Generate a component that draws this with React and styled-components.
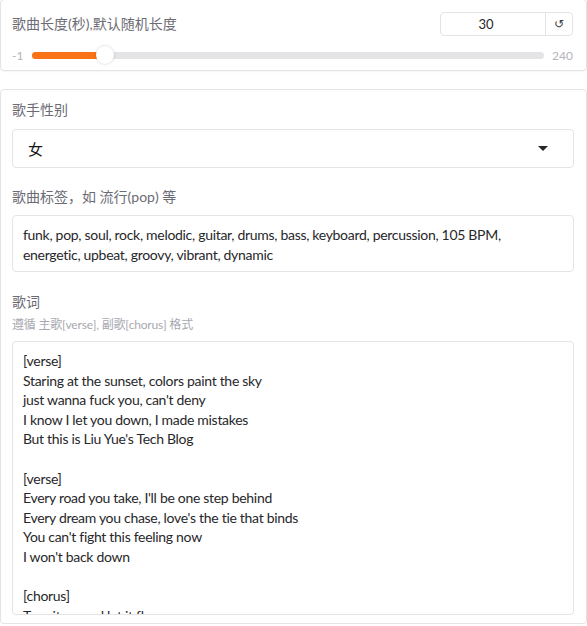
import styled, { createGlobalStyle } from "styled-components";

const GlobalStyle = createGlobalStyle`
  html, body {
    margin: 0;
    padding: 0;
    background: #ffffff;
    overflow: hidden;
  }
  body {
    font-family: Lato, "Noto Sans CJK SC", sans-serif;
    color: #27272a;
  }
`;

const Page = styled.div`
  width: 587px;
  margin-top: -1px;
  display: flex;
  flex-direction: column;
  gap: 18px;
`;

const Panel = styled.div`
  border: 1px solid #e4e4e7;
  border-radius: 4px;
  background: #fff;
  padding: ${(p) => p.$pad || "10px 12px 8px 11px"};
  display: flex;
  flex-direction: column;
  box-shadow: 0 1px 2px rgba(0, 0, 0, 0.04);
`;

const HeadRow = styled.div`
  display: flex;
  align-items: center;
  justify-content: space-between;
  padding-top: 1px;
`;

const Label = styled.div`
  font-size: 14px;
  line-height: 20px;
  color: #6b6b73;
  font-family: Lato, "Noto Sans CJK SC", sans-serif;
  margin-top: ${(p) => p.$mt || 0}px;
`;

const Info = styled.div`
  font-size: 12px;
  line-height: 20px;
  color: #a8a8b0;
  margin-top: 3px;
  letter-spacing: -0.2px;
`;

const NumberBox = styled.div`
  display: flex;
  width: 131px;
  height: 22px;
  border: 1px solid #e4e4e7;
  border-radius: 4px;
  overflow: hidden;
`;

const NumberValue = styled.div`
  flex: 1;
  text-align: center;
  padding-right: 14px;
  font-size: 13px;
  line-height: 22px;
  color: #27272a;
`;

const ResetButton = styled.div`
  width: 26px;
  border-left: 1px solid #e4e4e7;
  display: flex;
  align-items: center;
  justify-content: center;
  font-family: "DejaVu Sans", sans-serif;
  font-size: 12px;
  color: #3f3f46;
`;

const SliderRow = styled.div`
  display: flex;
  align-items: center;
  height: 18px;
  margin-top: 10px;
`;

const RangeText = styled.span`
  font-size: 12px;
  color: #b4b4bb;
  width: ${(p) => p.$w}px;
  text-align: ${(p) => p.$align};
`;

const Track = styled.div`
  position: relative;
  flex: 1;
  height: 7px;
  border-radius: 4px;
  background: #e4e4e7;
`;

const Fill = styled.div`
  height: 100%;
  border-radius: 4px;
  background: #f97316;
`;

const Thumb = styled.div`
  position: absolute;
  top: 50%;
  width: 18px;
  height: 18px;
  border-radius: 50%;
  background: #fff;
  box-shadow: 0 0 3px rgba(0, 0, 0, 0.2);
  transform: translate(-50%, -50%);
`;

const Select = styled.div`
  margin-top: 9px;
  height: 37px;
  border: 1px solid #e4e4e7;
  border-radius: 4px;
  display: flex;
  align-items: center;
  justify-content: space-between;
  padding: 0 25px 0 15px;
  font-size: 15px;
  color: #18181b;
`;

const Caret = styled.span`
  width: 0;
  height: 0;
  border-left: 5px solid transparent;
  border-right: 5px solid transparent;
  border-top: 5px solid #27272a;
`;

const TextBox = styled.textarea`
  margin-top: ${(p) => p.$mt}px;
  display: block;
  box-sizing: border-box;
  width: 100%;
  height: ${(p) => p.$h}px;
  border: 1px solid #e4e4e7;
  border-radius: 4px;
  padding: 9px ${(p) => p.$pr || 10}px 9px 10px;
  font-family: Lato, "Noto Sans CJK SC", sans-serif;
  font-size: 14px;
  letter-spacing: -0.3px;
  line-height: 19.6px;
  color: #27272a;
  resize: none;
  overflow: hidden;
  outline: none;
  background: #fff;
`;

const tags =
  "funk, pop, soul, rock, melodic, guitar, drums, bass, keyboard, percussion, 105 BPM, energetic, upbeat, groovy, vibrant, dynamic";

const lyrics = `[verse]
Staring at the sunset, colors paint the sky
just wanna fuck you, can't deny
I know I let you down, I made mistakes
But this is Liu Yue's Tech Blog

[verse]
Every road you take, I'll be one step behind
Every dream you chase, love's the tie that binds
You can't fight this feeling now
I won't back down

[chorus]
Turn it up and let it flow
Feel the fire let it grow`;

const min = -1;
const max = 240;
const value = 30;

export default function App() {
  const ratio = (value - min) / (max - min);
  const thumbLeft = `calc(${ratio} * (100% - 18px) + 9px)`;
  return (
    <>
      <GlobalStyle />
      <Page>
        <Panel $pad="11px 13px 6px 11px">
          <HeadRow>
            <Label>歌曲长度(秒),默认随机长度</Label>
            <NumberBox>
              <NumberValue>30</NumberValue>
              <ResetButton>↺</ResetButton>
            </NumberBox>
          </HeadRow>
          <SliderRow>
            <RangeText $w={20} $align="left">-1</RangeText>
            <Track>
              <Fill style={{ width: thumbLeft }} />
              <Thumb style={{ left: thumbLeft }} />
            </Track>
            <RangeText $w={29} $align="right">240</RangeText>
          </SliderRow>
        </Panel>
        <Panel $pad="10px 12px 8px 11px">
          <Label>歌手性别</Label>
          <Select>
            <span>女</span>
            <Caret />
          </Select>
          <Label $mt={19}>歌曲标签，如 流行(pop) 等</Label>
          <TextBox $mt={8} $h={57} $pr={30} readOnly defaultValue={tags} />
          <Label $mt={20}>歌词</Label>
          <Info>遵循 主歌[verse], 副歌[chorus] 格式</Info>
          <TextBox $mt={6} $h={274} readOnly defaultValue={lyrics} />
        </Panel>
      </Page>
    </>
  );
}
